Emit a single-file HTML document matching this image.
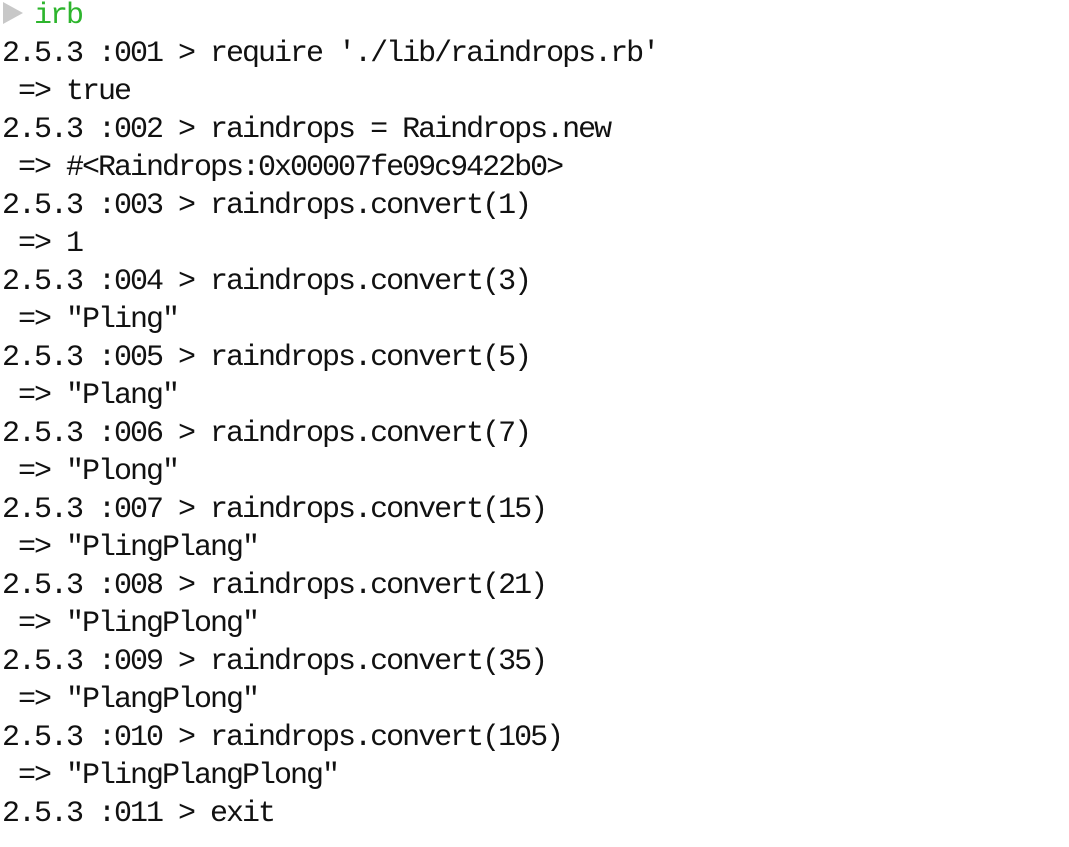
<!DOCTYPE html>
<html><head><style>
body{margin:0;background:#fff;width:1069px;height:847px;overflow:hidden}
pre{margin:0;position:absolute;left:2px;top:-3px;font-family:"Liberation Mono",monospace;font-size:30px;letter-spacing:-2px;line-height:38px;color:#111}
.g{color:#2db52d}
.t{position:absolute;left:3px;top:2px;width:0;height:0;border-top:11px solid transparent;border-bottom:11px solid transparent;border-left:20px solid #c8c8c8}
</style></head><body>
<div class="t"></div>
<pre>  <span class="g">irb</span>
2.5.3 :001 &gt; require './lib/raindrops.rb'
 =&gt; true
2.5.3 :002 &gt; raindrops = Raindrops.new
 =&gt; #&lt;Raindrops:0x00007fe09c9422b0&gt;
2.5.3 :003 &gt; raindrops.convert(1)
 =&gt; 1
2.5.3 :004 &gt; raindrops.convert(3)
 =&gt; "Pling"
2.5.3 :005 &gt; raindrops.convert(5)
 =&gt; "Plang"
2.5.3 :006 &gt; raindrops.convert(7)
 =&gt; "Plong"
2.5.3 :007 &gt; raindrops.convert(15)
 =&gt; "PlingPlang"
2.5.3 :008 &gt; raindrops.convert(21)
 =&gt; "PlingPlong"
2.5.3 :009 &gt; raindrops.convert(35)
 =&gt; "PlangPlong"
2.5.3 :010 &gt; raindrops.convert(105)
 =&gt; "PlingPlangPlong"
2.5.3 :011 &gt; exit</pre>
</body></html>
